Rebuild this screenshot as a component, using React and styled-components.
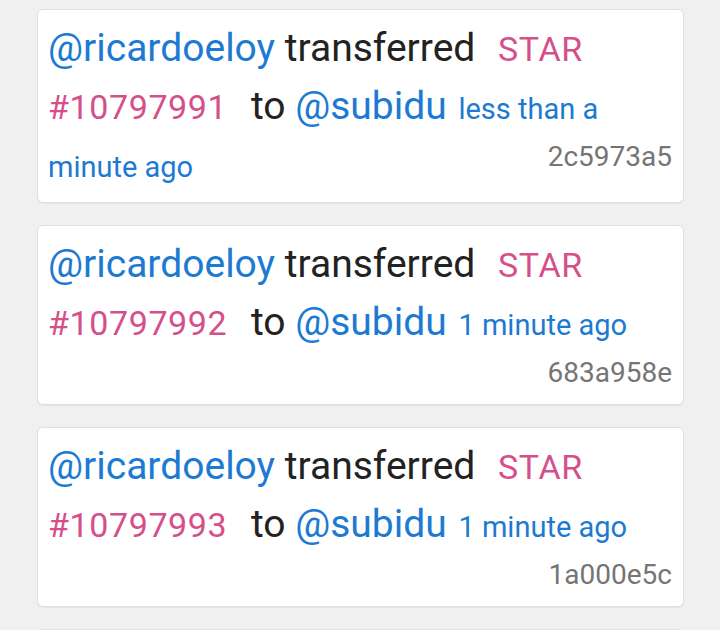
import React from 'react';
import styled, { createGlobalStyle } from 'styled-components';

const GlobalStyle = createGlobalStyle`
  html, body {
    margin: 0;
    padding: 0;
    background-color: #f0f0f0;
  }
  body {
    font-family: Roboto, "Liberation Sans", Arial, sans-serif;
    -webkit-font-smoothing: antialiased;
  }
`;

const transfers = [
  { from: 'ricardoeloy', to: 'subidu', token: 'STAR', id: '10797991', time: 'less than a minute ago', hash: '2c5973a5' },
  { from: 'ricardoeloy', to: 'subidu', token: 'STAR', id: '10797992', time: '1 minute ago', hash: '683a958e' },
  { from: 'ricardoeloy', to: 'subidu', token: 'STAR', id: '10797993', time: '1 minute ago', hash: '1a000e5c' },
  { from: 'ricardoeloy', to: 'subidu', token: 'STAR', id: '10797994', time: '1 minute ago', hash: '9b41d07f' },
];

const Feed = styled.div`
  display: flex;
  flex-direction: column;
  gap: 22px;
  padding: 9px 36px 0 37px;
  height: 630px;
  overflow: hidden;
  box-sizing: border-box;
`;

const Card = styled.div`
  display: flow-root;
  flex-shrink: 0;
  background-color: #ffffff;
  border: 1px solid #dfdfdf;
  border-radius: 6px;
  box-shadow: 0 1px 1px rgba(0, 0, 0, 0.05);
  padding: 9px 11px 9px 10px;
`;

const Message = styled.div`
  font-size: 39px;
  line-height: 58px;
  color: #222222;
`;

const User = styled.span`
  color: #1d7ad2;
`;

const Token = styled.span`
  color: #d5508a;
  font-size: 34px;
  line-height: 1;
  letter-spacing: 0.6px;
  margin: 0 14px 0 13px;
`;

const Time = styled.span`
  color: #1d7ad2;
  font-size: 29px;
  line-height: 1;
  margin-left: 2px;
`;

const Hash = styled.span`
  float: right;
  font-size: 28px;
  line-height: 44px;
  color: #757575;
`;

function TransferCard({ item }) {
  return (
    <Card>
      <Message>
        <User>@{item.from}</User> transferred{' '}
        <Token>{item.token} #{item.id}</Token>
        {' '}to <User>@{item.to}</User> <Time>{item.time}</Time>
        <Hash>{item.hash}</Hash>
      </Message>
    </Card>
  );
}

export default function App() {
  return (
    <>
      <GlobalStyle />
      <Feed>
        {transfers.map((item) => (
          <TransferCard key={item.id} item={item} />
        ))}
      </Feed>
    </>
  );
}
